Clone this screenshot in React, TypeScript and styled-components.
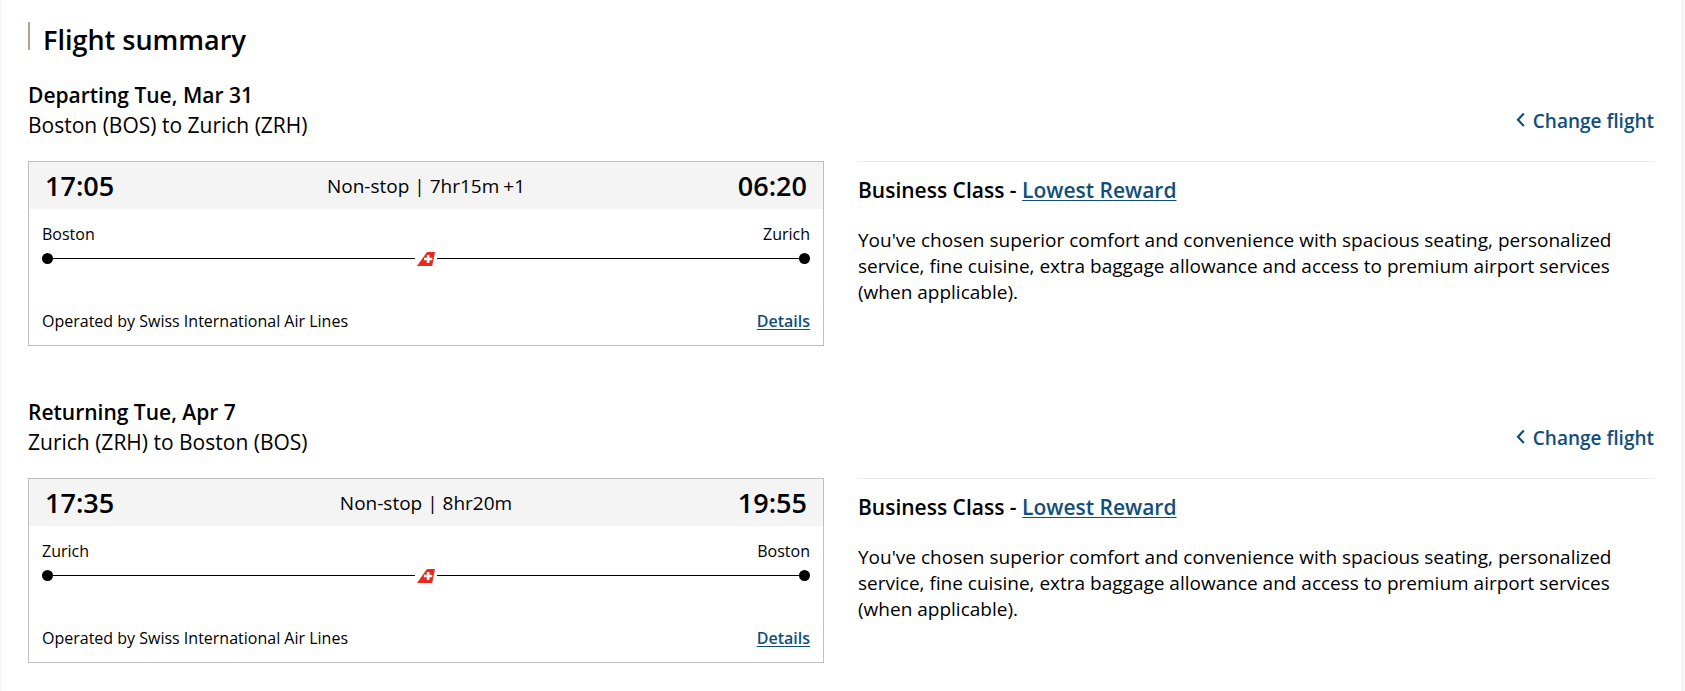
import styled, { createGlobalStyle } from "styled-components";

const color = {
  text: "#000",
  link: "#114e7a",
  accent: "#b9a48b",
  border: "#bfbfbf",
  rule: "#ececec",
  band: "#f4f4f4",
  edge: "#f4f4f4",
};

const GlobalStyle = createGlobalStyle`
  *, *::before, *::after { box-sizing: border-box; }
  body {
    margin: 0;
    background: #fff;
    color: ${color.text};
    font-family: "Open Sans", "Noto Sans", sans-serif;
  }
  h1, h2, h3, p { margin: 0; font-weight: 400; }
`;

const Page = styled.main`
  min-height: 100vh;
  padding: 22px 27px;
  border-left: 1px solid ${color.edge};
  border-right: 4px solid ${color.edge};
`;

const Title = styled.h1`
  display: flex;
  align-items: flex-start;
  gap: 13px;
  font-size: 27px;
  font-weight: 600;
  line-height: 36px;

  &::before {
    content: "";
    width: 2px;
    height: 28px;
    background: ${color.accent};
  }
`;

const Segments = styled.div`
  display: flex;
  flex-direction: column;
  gap: 51px;
  margin-top: 22px;
`;

const SegmentHeader = styled.header`
  display: flex;
  justify-content: space-between;
  align-items: flex-end;
  margin-bottom: 21px;
`;

const SegmentTitle = styled.h2`
  font-size: 21px;
  line-height: 30px;
`;

const DateLine = styled.span`
  display: block;
  font-weight: 600;
`;

const Link = styled.a<{ $plain?: boolean }>`
  color: ${color.link};
  font-weight: 600;
  text-decoration: ${(p) => (p.$plain ? "none" : "underline")};
  text-decoration-thickness: 1px;
  text-underline-offset: 2px;
`;

const ChangeLink = styled(Link)`
  display: flex;
  align-items: center;
  gap: 8px;
  padding-bottom: 6px;
  font-size: 19px;
  line-height: 26px;
`;

const Columns = styled.div`
  display: grid;
  grid-template-columns: 1fr 1fr;
  gap: 34px;
  align-items: start;
`;

const Card = styled.article`
  border: 1px solid ${color.border};
`;

const CardHeader = styled.div`
  display: grid;
  grid-template-columns: 1fr auto 1fr;
  align-items: center;
  height: 47px;
  padding: 0 16px;
  background: ${color.band};
`;

const Time = styled.time<{ $end?: boolean }>`
  font-size: 27px;
  font-weight: 600;
  line-height: 36px;
  text-align: ${(p) => (p.$end ? "right" : "left")};
`;

const Duration = styled.p`
  display: flex;
  gap: 4px;
  font-size: 19px;
  line-height: 26px;
`;

const CardBody = styled.div`
  padding: 13px 13px 12px;
`;

const Row = styled.div`
  display: flex;
  justify-content: space-between;
  font-size: 16px;
  line-height: 24px;
`;

const Track = styled.div`
  display: flex;
  align-items: center;
  height: 15px;
  margin: 5px 0 43px;
`;

const Dot = styled.span`
  width: 11px;
  height: 11px;
  border-radius: 50%;
  background: ${color.text};
`;

const Line = styled.span`
  flex: 1;
  height: 1px;
  background: ${color.text};
`;

const Logo = styled.svg`
  width: 18px;
  height: 14px;
  margin: 0 2px;
`;

const Fare = styled.section`
  padding-top: 13px;
  border-top: 1px solid ${color.rule};
`;

const FareTitle = styled.h3`
  font-size: 21px;
  font-weight: 600;
  line-height: 30px;
`;

const FareText = styled.p`
  margin-top: 22px;
  font-size: 19px;
  line-height: 26px;
`;

type Flight = {
  date: string;
  from: string;
  fromCode: string;
  to: string;
  toCode: string;
  departs: string;
  arrives: string;
  duration: string;
  dayShift?: string;
};

const flights: Flight[] = [
  {
    date: "Departing Tue, Mar 31",
    from: "Boston",
    fromCode: "BOS",
    to: "Zurich",
    toCode: "ZRH",
    departs: "17:05",
    arrives: "06:20",
    duration: "7hr15m",
    dayShift: "+1",
  },
  {
    date: "Returning Tue, Apr 7",
    from: "Zurich",
    fromCode: "ZRH",
    to: "Boston",
    toCode: "BOS",
    departs: "17:35",
    arrives: "19:55",
    duration: "8hr20m",
  },
];

const Chevron = () => (
  <svg width="9" height="18" viewBox="0 0 9 18" fill="none" aria-hidden="true">
    <path d="M7.8 1.6 L2 7.8 L7.8 14" stroke="currentColor" strokeWidth="2.2" />
  </svg>
);

const SwissTail = () => (
  <Logo viewBox="0 0 18 14" role="img" aria-label="Swiss">
    <path d="M9.6 0.6 Q10.2 0 11 0 H18 L15.2 14 H0 Z" fill="#e8291c" />
    <path
      d="M9.8 2.9 H12.4 V5.7 H15.2 V8.3 H12.4 V11.1 H9.8 V8.3 H7 V5.7 H9.8 Z"
      fill="#fff"
    />
  </Logo>
);

const FlightSegment = ({ flight }: { flight: Flight }) => (
  <section>
    <SegmentHeader>
      <SegmentTitle>
        <DateLine>{flight.date}</DateLine>
        {`${flight.from} (${flight.fromCode}) to ${flight.to} (${flight.toCode})`}
      </SegmentTitle>
      <ChangeLink href="#change" $plain>
        <Chevron />
        Change flight
      </ChangeLink>
    </SegmentHeader>
    <Columns>
      <Card>
        <CardHeader>
          <Time>{flight.departs}</Time>
          <Duration>
            <span>Non-stop | {flight.duration}</span>
            {flight.dayShift && <span>{flight.dayShift}</span>}
          </Duration>
          <Time $end>{flight.arrives}</Time>
        </CardHeader>
        <CardBody>
          <Row>
            <span>{flight.from}</span>
            <span>{flight.to}</span>
          </Row>
          <Track>
            <Dot />
            <Line />
            <SwissTail />
            <Line />
            <Dot />
          </Track>
          <Row>
            <span>Operated by Swiss International Air Lines</span>
            <Link href="#details">Details</Link>
          </Row>
        </CardBody>
      </Card>
      <Fare>
        <FareTitle>
          Business Class - <Link href="#fare">Lowest Reward</Link>
        </FareTitle>
        <FareText>
          You've chosen superior comfort and convenience with spacious seating,
          personalized service, fine cuisine, extra baggage allowance and access
          to premium airport services (when applicable).
        </FareText>
      </Fare>
    </Columns>
  </section>
);

export default function App() {
  return (
    <>
      <GlobalStyle />
      <Page>
        <Title>Flight summary</Title>
        <Segments>
          {flights.map((flight) => (
            <FlightSegment key={flight.date} flight={flight} />
          ))}
        </Segments>
      </Page>
    </>
  );
}
